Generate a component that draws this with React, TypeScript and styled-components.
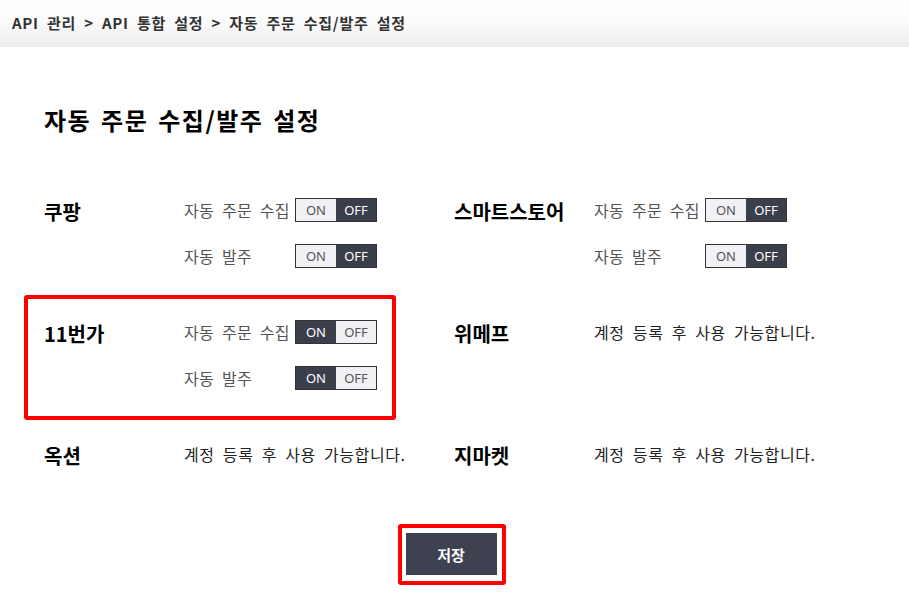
import styled, { createGlobalStyle } from "styled-components";

const GlobalStyle = createGlobalStyle`
  body {
    margin: 0;
    background: #fff;
    font-family: "Noto Sans CJK KR", "Noto Sans", sans-serif;
    color: #222;
  }
`;

type Channel = {
  name: string;
  order?: boolean;
  purchase?: boolean;
  highlight?: boolean;
};

const channels: Channel[] = [
  { name: "쿠팡", order: false, purchase: false },
  { name: "스마트스토어", order: false, purchase: false },
  { name: "11번가", order: true, purchase: true, highlight: true },
  { name: "위메프" },
  { name: "옥션" },
  { name: "지마켓" },
];

function Toggle({ on }: { on: boolean }) {
  return (
    <StyledToggle>
      <Segment $active={on}>ON</Segment>
      <Segment $active={!on}>OFF</Segment>
    </StyledToggle>
  );
}

export default function App() {
  return (
    <>
      <GlobalStyle />
      <Breadcrumb>API 관리 &gt; API 통합 설정 &gt; 자동 주문 수집/발주 설정</Breadcrumb>
      <Main>
        <Title>자동 주문 수집/발주 설정</Title>
        <Grid>
          {channels.map((ch) => (
            <Cell key={ch.name} $highlight={ch.highlight}>
              <Name>{ch.name}</Name>
              {ch.order === undefined ? (
                <Notice>계정 등록 후 사용 가능합니다.</Notice>
              ) : (
                <Lines>
                  <Line>
                    <Label>자동 주문 수집</Label>
                    <Toggle on={!!ch.order} />
                  </Line>
                  <Line>
                    <Label>자동 발주</Label>
                    <Toggle on={!!ch.purchase} />
                  </Line>
                </Lines>
              )}
            </Cell>
          ))}
        </Grid>
        <Footer>
          <Highlight>
            <SaveButton>저장</SaveButton>
          </Highlight>
        </Footer>
      </Main>
    </>
  );
}

const Breadcrumb = styled.div`
  height: 47px;
  padding: 0 12px 3px;
  display: flex;
  align-items: center;
  box-sizing: border-box;
  background: linear-gradient(to bottom, #ffffff 0%, #fafafa 50%, #ececec 100%);
  font-size: 15px;
  font-weight: 700;
  letter-spacing: 0.75px;
  word-spacing: 4px;
  color: #333;
`;

const Main = styled.main`
  padding: 0 44px;
`;

const Title = styled.h1`
  margin: 57px 0 0;
  font-size: 24px;
  line-height: 32px;
  font-weight: 700;
  color: #000;
  letter-spacing: 1.5px;
  word-spacing: 3px;
`;

const Grid = styled.div`
  margin-top: 62px;
  display: grid;
  grid-template-columns: 410px 1fr;
  row-gap: 52px;
`;

const Cell = styled.div<{ $highlight?: boolean }>`
  display: flex;
  align-items: flex-start;
  position: relative;

  ${({ $highlight }) =>
    $highlight &&
    `
    &::after {
      content: "";
      position: absolute;
      top: -25px;
      left: -20px;
      width: 372px;
      height: 125px;
      box-sizing: border-box;
      border: 4px solid #ff0000;
      border-radius: 3px;
    }
  `}
`;

const Name = styled.div`
  width: 140px;
  flex-shrink: 0;
  padding-top: 2px;
  line-height: 24px;
  font-size: 20px;
  font-weight: 700;
  color: #000;
`;

const Lines = styled.div`
  display: flex;
  flex-direction: column;
  gap: 22px;
`;

const Line = styled.div`
  display: flex;
  align-items: center;
  height: 24px;
`;

const Label = styled.span`
  width: 111px;
  font-size: 16px;
  letter-spacing: 0.3px;
  word-spacing: 4px;
  color: #555;
`;

const Notice = styled.div`
  line-height: 24px;
  font-size: 16px;
  letter-spacing: 0.6px;
  word-spacing: 4px;
  color: #222;
`;

const StyledToggle = styled.div`
  display: flex;
  width: 82px;
  height: 24px;
  box-sizing: border-box;
  border: 1px solid #333;
`;

const Segment = styled.span<{ $active: boolean }>`
  flex: 1;
  display: flex;
  align-items: center;
  justify-content: center;
  font-family: "Noto Sans", sans-serif;
  font-size: 13px;
  background: ${({ $active }) => ($active ? "#3b3e4b" : "#f1f1f5")};
  color: ${({ $active }) => ($active ? "#fff" : "#555")};
`;

const Footer = styled.div`
  margin-top: 56px;
  display: flex;
  justify-content: center;
  padding-right: 6px;
`;

const Highlight = styled.div`
  display: flex;
  padding: 5px 5px 6px 4px;
  border: 4px solid #ff0000;
  border-radius: 3px;
`;

const SaveButton = styled.button`
  width: 91px;
  height: 42px;
  border: none;
  background: #3e4150;
  color: #fff;
  font-family: "Noto Sans CJK KR", sans-serif;
  font-size: 15px;
  font-weight: 700;
  cursor: pointer;
`;
